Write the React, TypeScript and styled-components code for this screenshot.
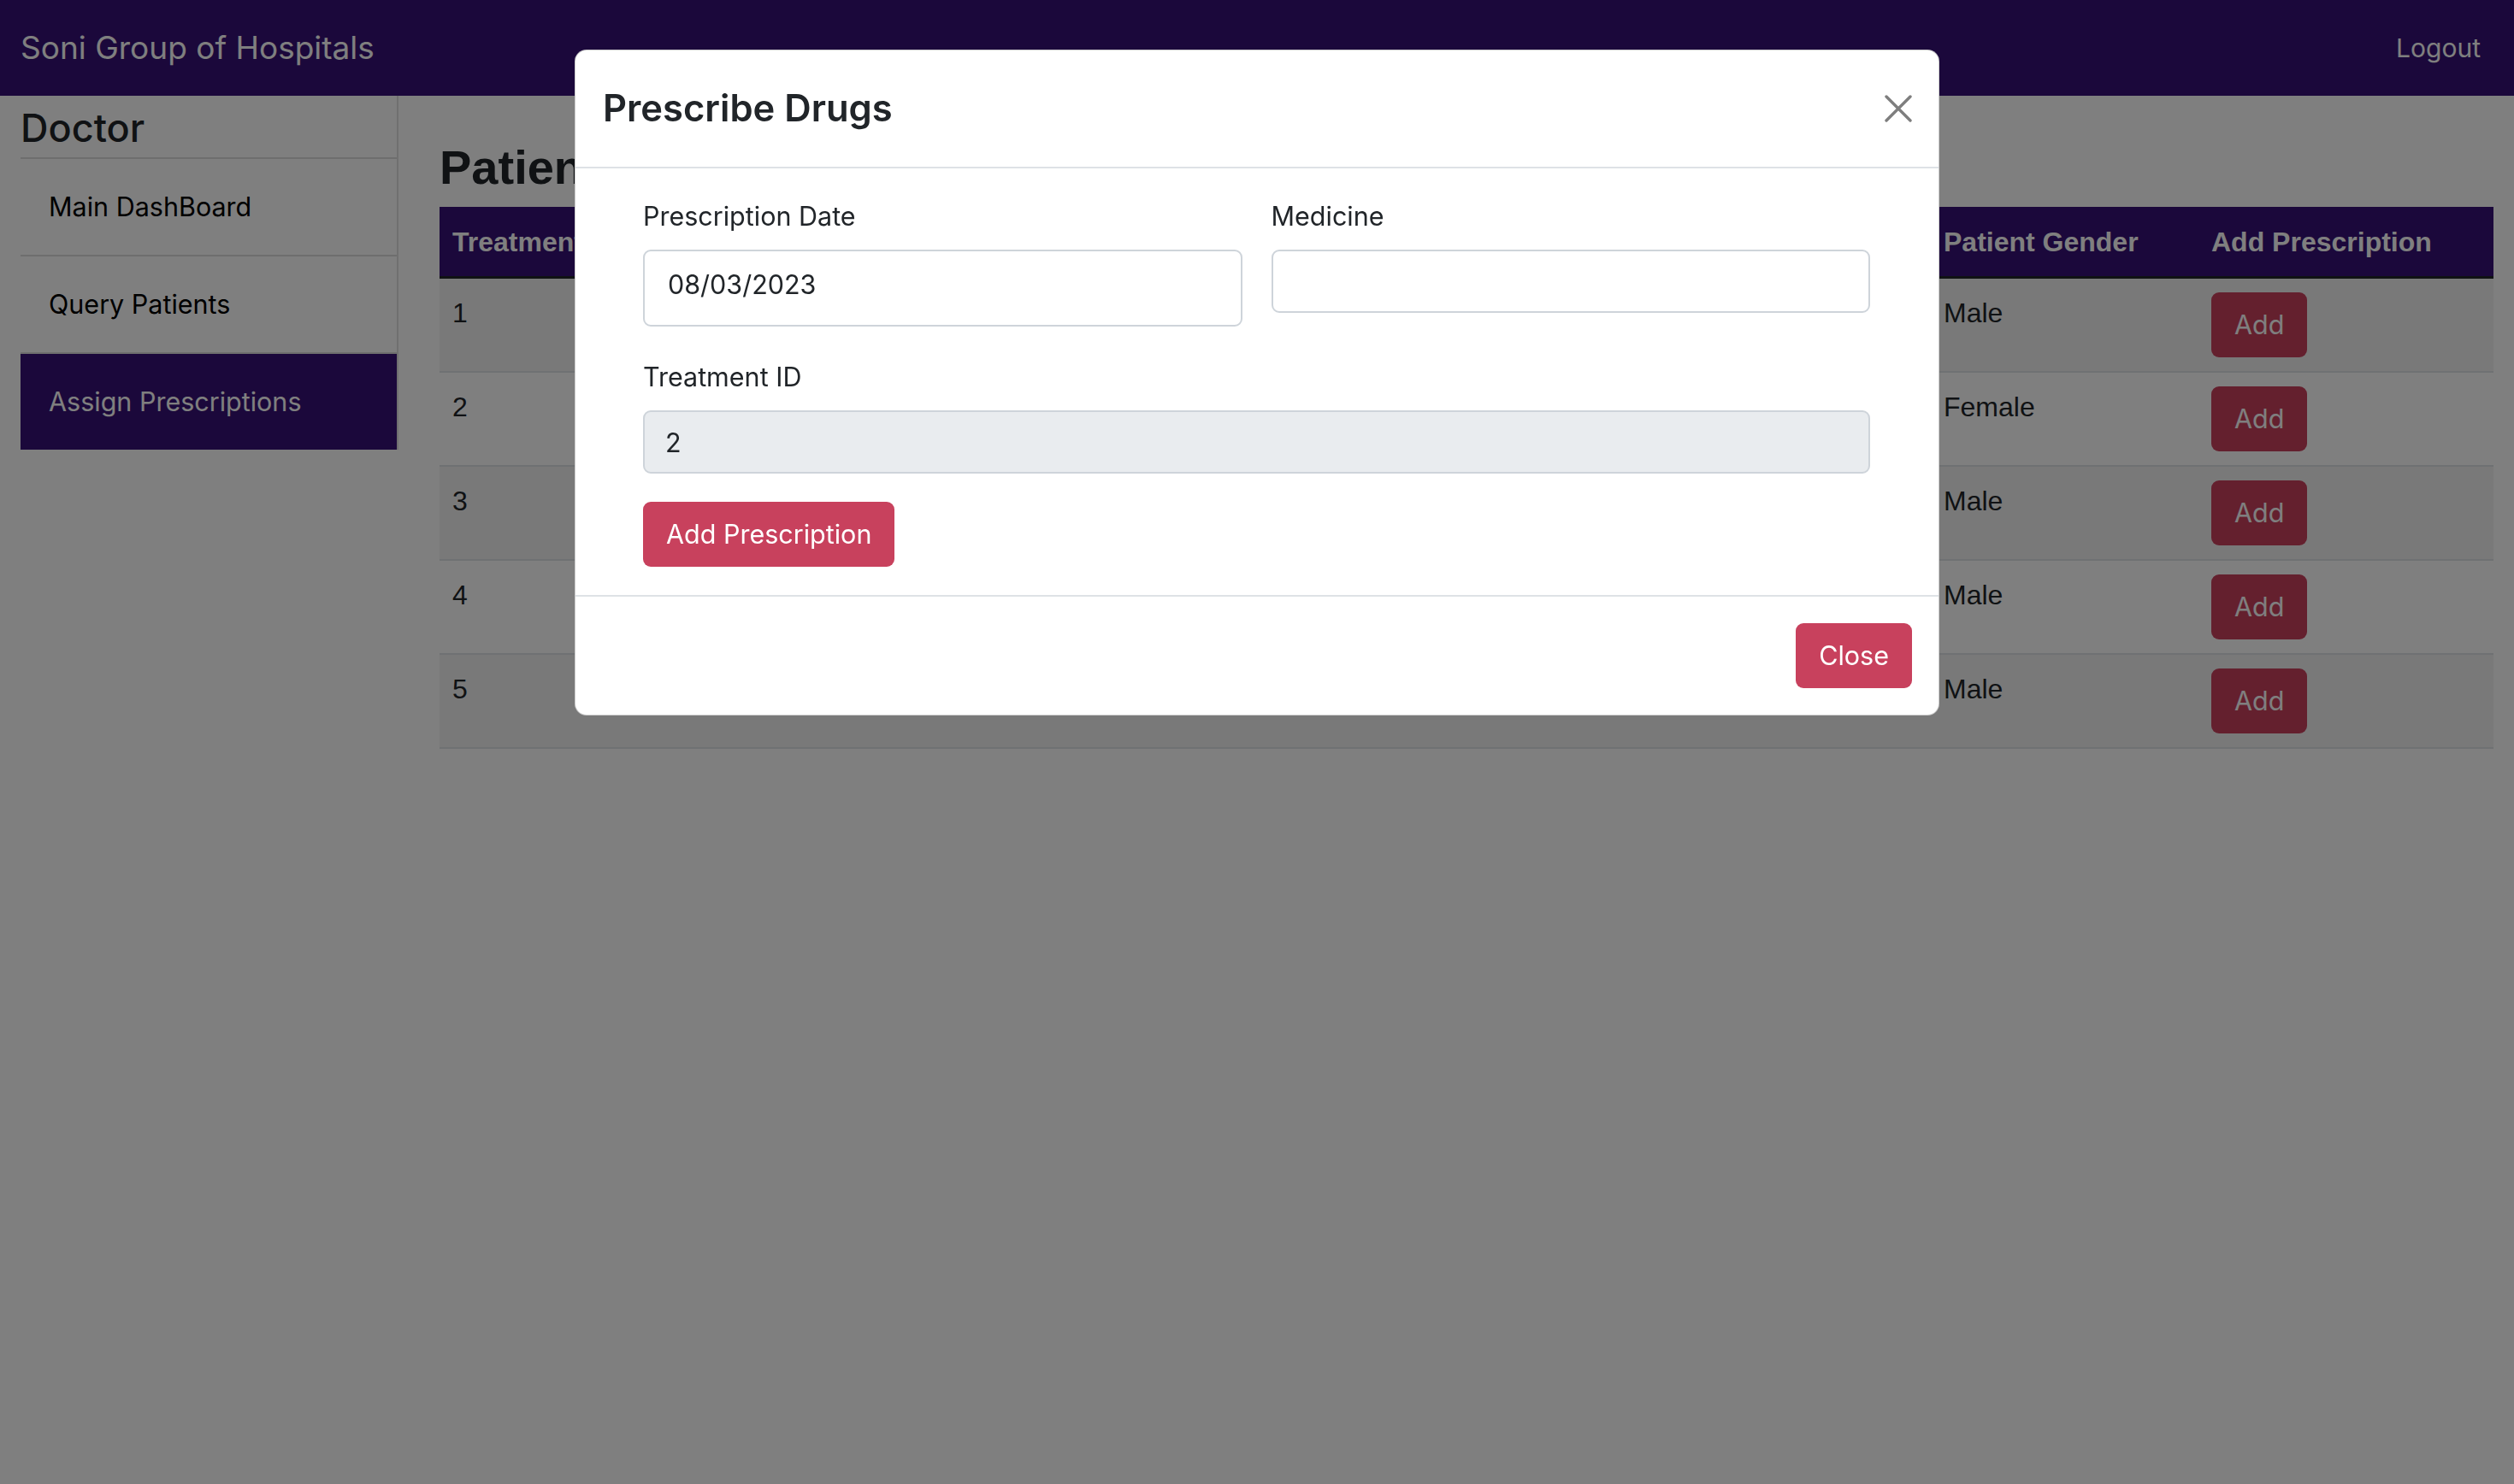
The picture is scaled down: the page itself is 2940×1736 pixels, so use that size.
import React from "react";
import styled, { createGlobalStyle } from "styled-components";

const PURPLE = "#361076";
const DANGER = "#c8415d";

const GlobalStyle = createGlobalStyle`
  html, body {
    margin: 0;
    padding: 0;
    background: #ffffff;
    font-family: Inter, "Noto Sans", "Liberation Sans", sans-serif;
    color: #212529;
  }
  * { box-sizing: border-box; }
`;

const Page = styled.div`
  min-height: 1736px;
  display: flex;
  flex-direction: column;
`;

const NavBar = styled.nav`
  height: 112px;
  background: ${PURPLE};
  display: flex;
  align-items: center;
  justify-content: space-between;
  padding: 0 39px 0 24px;
`;

const Brand = styled.a`
  font-size: 37px;
  color: #ffffff;
  text-decoration: none;
  line-height: 1.5;
`;

const NavLink = styled.a`
  font-size: 30px;
  color: #ffffff;
  text-decoration: none;
  line-height: 1.5;
`;

const Layout = styled.div`
  display: flex;
  align-items: flex-start;
`;

const Sidebar = styled.aside`
  width: 466px;
  flex: 0 0 466px;
  padding-left: 24px;
  border-right: 2px solid #e0e0e0;
  display: flex;
  flex-direction: column;
`;

const SideTitle = styled.h4`
  margin: 11px 0 7px;
  font-size: 45px;
  font-weight: 500;
  line-height: 1.2;
  color: #212529;
`;

const SideItem = styled.a<{ $active?: boolean }>`
  display: flex;
  align-items: center;
  height: 114px;
  padding-left: 33px;
  border-top: 2px solid #dddddd;
  font-size: 30.5px;
  line-height: 1.5;
  text-decoration: none;
  color: ${(p) => (p.$active ? "#ffffff" : "#000000")};
  background: ${(p) => (p.$active ? PURPLE : "transparent")};
`;

const Main = styled.main`
  flex: 1;
  padding: 50px 24px 0 48px;
`;

const PageTitle = styled.h2`
  margin: 0 0 13px;
  font-family: "Liberation Sans", Arial, sans-serif;
  font-size: 56px;
  font-weight: 700;
  line-height: 1.2;
  color: #212529;
`;

const Table = styled.table`
  width: 100%;
  table-layout: fixed;
  border-collapse: collapse;
  font-family: "Liberation Sans", Arial, sans-serif;
  font-size: 32px;
  line-height: 1.5;
  color: #212529;
  vertical-align: top;
`;

const HeadRow = styled.tr`
  background: ${PURPLE};
  border-bottom: 3px solid #212529;
`;

const Th = styled.th`
  padding: 17px 15px 16px;
  text-align: left;
  font-weight: 700;
  color: #ffffff;
  white-space: nowrap;
  overflow: hidden;
`;

const BodyRow = styled.tr<{ $striped: boolean }>`
  background: ${(p) => (p.$striped ? "rgba(0,0,0,0.05)" : "transparent")};
  border-bottom: 2px solid #dee2e6;
`;

const Td = styled.td`
  padding: 16px 15px;
  vertical-align: top;
  white-space: nowrap;
  overflow: hidden;
`;

const Button = styled.button`
  height: 76px;
  padding: 0 27px;
  border: none;
  border-radius: 9px;
  background: ${DANGER};
  color: #ffffff;
  font-family: Inter, "Noto Sans", sans-serif;
  font-size: 30.5px;
  line-height: 1.5;
  cursor: pointer;
  display: inline-flex;
  align-items: center;
`;

const Backdrop = styled.div`
  position: fixed;
  inset: 0;
  background: rgba(0, 0, 0, 0.5);
`;

const ModalLayer = styled.div`
  position: fixed;
  inset: 0;
  display: flex;
  justify-content: center;
  align-items: flex-start;
  padding-top: 58px;
`;

const ModalCard = styled.div`
  width: 1596px;
  background: #ffffff;
  border: 1px solid rgba(0, 0, 0, 0.2);
  border-radius: 14px;
  display: flex;
  flex-direction: column;
`;

const ModalHeader = styled.div`
  height: 138px;
  padding: 0 31px 0 32px;
  border-bottom: 2px solid #dee2e6;
  display: flex;
  align-items: center;
  justify-content: space-between;
`;

const ModalTitle = styled.h5`
  margin: 0;
  font-size: 43.5px;
  font-weight: 600;
  line-height: 1.5;
  color: #212529;
`;

const CloseX = styled.button`
  width: 32px;
  height: 32px;
  padding: 0;
  border: none;
  background: transparent;
  opacity: 0.5;
  display: flex;
  cursor: pointer;
`;

const ModalBody = styled.div`
  padding: 33px 80px 33px 79px;
  display: flex;
  flex-direction: column;
`;

const FormRow = styled.div<{ $cols: number }>`
  display: grid;
  grid-template-columns: repeat(${(p) => p.$cols}, 1fr);
  column-gap: 34px;
  align-items: start;
  margin-bottom: ${(p) => (p.$cols > 1 ? "36px" : "33px")};
`;

const Field = styled.div`
  display: flex;
  flex-direction: column;
`;

const Label = styled.label`
  font-size: 30.5px;
  line-height: 45px;
  margin-bottom: 17px;
  color: #212529;
`;

const Input = styled.input<{ $tall?: boolean; $disabled?: boolean }>`
  height: ${(p) => (p.$tall ? "90px" : "74px")};
  padding: ${(p) => (p.$tall ? "0 27px 10px 27px" : "0 24px")};
  border: 2px solid #ced4da;
  border-radius: 9px;
  background: ${(p) => (p.$disabled ? "#e9ecef" : "#ffffff")};
  font-family: Inter, "Noto Sans", sans-serif;
  font-size: 30.5px;
  color: #212529;
  outline: none;
  width: 100%;
`;

const ModalFooter = styled.div`
  border-top: 2px solid #dee2e6;
  padding: 31px 31px 31px;
  display: flex;
  justify-content: flex-end;
`;

const rows = [
  { id: 1, pid: 101, name: "Rahul Sharma", disease: "Fever", gender: "Male" },
  { id: 2, pid: 102, name: "Priya Verma", disease: "Migraine", gender: "Female" },
  { id: 3, pid: 103, name: "Amit Kumar", disease: "Diabetes", gender: "Male" },
  { id: 4, pid: 104, name: "Rohan Gupta", disease: "Asthma", gender: "Male" },
  { id: 5, pid: 105, name: "Vikas Singh", disease: "Fracture", gender: "Male" },
];

export default function App() {
  return (
    <>
      <GlobalStyle />
      <Page>
        <NavBar>
          <Brand href="#">Soni Group of Hospitals</Brand>
          <NavLink href="#">Logout</NavLink>
        </NavBar>
        <Layout>
          <Sidebar>
            <SideTitle>Doctor</SideTitle>
            <SideItem href="#">Main DashBoard</SideItem>
            <SideItem href="#">Query Patients</SideItem>
            <SideItem href="#" $active>
              Assign Prescriptions
            </SideItem>
          </Sidebar>
          <Main>
            <PageTitle>Patients Treatment</PageTitle>
            <Table>
              <colgroup>
                <col style={{ width: 436 }} />
                <col style={{ width: 436 }} />
                <col style={{ width: 436 }} />
                <col style={{ width: 436 }} />
                <col style={{ width: 313 }} />
                <col style={{ width: 345 }} />
              </colgroup>
              <thead>
                <HeadRow>
                  <Th>Treatment ID</Th>
                  <Th>Patient ID</Th>
                  <Th>Patient Name</Th>
                  <Th>Disease</Th>
                  <Th>Patient Gender</Th>
                  <Th>Add Prescription</Th>
                </HeadRow>
              </thead>
              <tbody>
                {rows.map((r, i) => (
                  <BodyRow key={r.id} $striped={i % 2 === 0}>
                    <Td>{r.id}</Td>
                    <Td>{r.pid}</Td>
                    <Td>{r.name}</Td>
                    <Td>{r.disease}</Td>
                    <Td>{r.gender}</Td>
                    <Td>
                      <Button>Add</Button>
                    </Td>
                  </BodyRow>
                ))}
              </tbody>
            </Table>
          </Main>
        </Layout>
      </Page>
      <Backdrop />
      <ModalLayer>
        <ModalCard>
          <ModalHeader>
            <ModalTitle>Prescribe Drugs</ModalTitle>
            <CloseX aria-label="Close">
              <svg width="32" height="32" viewBox="0 0 32 32">
                <path
                  d="M2 2 L30 30 M30 2 L2 30"
                  stroke="#000"
                  strokeWidth="3.4"
                  strokeLinecap="round"
                  fill="none"
                />
              </svg>
            </CloseX>
          </ModalHeader>
          <ModalBody>
            <FormRow $cols={2}>
              <Field>
                <Label>Prescription Date</Label>
                <Input $tall type="text" defaultValue="08/03/2023" />
              </Field>
              <Field>
                <Label>Medicine</Label>
                <Input type="text" defaultValue="" />
              </Field>
            </FormRow>
            <FormRow $cols={1}>
              <Field>
                <Label>Treatment ID</Label>
                <Input $disabled type="text" defaultValue="2" readOnly />
              </Field>
            </FormRow>
            <div>
              <Button>Add Prescription</Button>
            </div>
          </ModalBody>
          <ModalFooter>
            <Button>Close</Button>
          </ModalFooter>
        </ModalCard>
      </ModalLayer>
    </>
  );
}
